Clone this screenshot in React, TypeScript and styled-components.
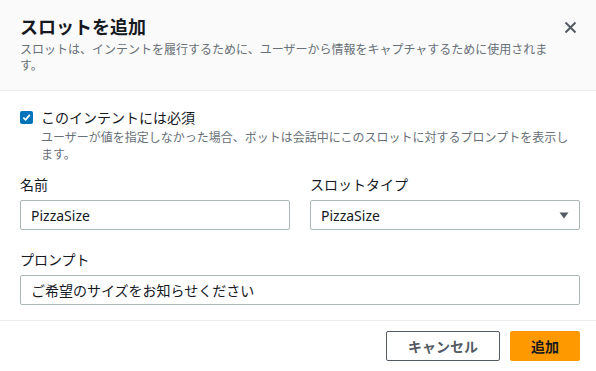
import React from "react";
import styled, { createGlobalStyle } from "styled-components";

const Global = createGlobalStyle`
  html, body { margin: 0; padding: 0; background: #ffffff; }
  body { font-family: "Noto Sans", "Noto Sans CJK JP", sans-serif; color: #16191f; }
  * { box-sizing: border-box; }
`;

const Modal = styled.div`
  width: 596px;
  height: 371px;
  display: flex;
  flex-direction: column;
  background: #fff;
`;

const Header = styled.div`
  background: #fafafa;
  border-bottom: 1px solid #eaeded;
  padding: 15px 19px 16px 20px;
  display: flex;
  align-items: flex-start;
  gap: 12px;
  height: 91px;
`;

const HeaderText = styled.div`
  flex: 1;
`;

const Title = styled.h2`
  margin: 0;
  font-size: 18px;
  line-height: 24px;
  font-weight: 700;
  color: #16191f;
`;

const Subtitle = styled.p`
  margin: 3px 0 0 0;
  font-size: 12px;
  line-height: 16px;
  color: #687078;
`;

const CloseButton = styled.button`
  border: none;
  background: transparent;
  padding: 0;
  margin: 5px 0 0 0;
  width: 14px;
  height: 14px;
  display: flex;
  align-items: center;
  justify-content: center;
  cursor: pointer;
`;

const Body = styled.div`
  flex: 1;
  padding: 17px 16px 0 20px;
  display: flex;
  flex-direction: column;
`;

const CheckRow = styled.label`
  display: flex;
  align-items: flex-start;
  gap: 8px;
`;

const Box = styled.span`
  width: 13px;
  height: 13px;
  margin-top: 3px;
  border-radius: 2px;
  background: #0073bb;
  display: flex;
  align-items: center;
  justify-content: center;
  flex-shrink: 0;
`;

const CheckText = styled.div`
  flex: 1;
`;

const CheckLabel = styled.div`
  font-size: 14px;
  line-height: 20px;
  color: #16191f;
`;

const Hint = styled.div`
  font-size: 12px;
  line-height: 17px;
  color: #687078;
  margin-top: 1px;
`;

const Grid = styled.div`
  display: grid;
  grid-template-columns: 1fr 1fr;
  column-gap: 20px;
  margin-top: 12px;
`;

const Field = styled.div<{ $top?: number }>`
  display: flex;
  flex-direction: column;
  margin-top: ${(p) => p.$top ?? 0}px;
`;

const Label = styled.div`
  font-size: 14px;
  line-height: 20px;
  color: #16191f;
  margin-bottom: 5px;
`;

const Input = styled.div`
  height: 30px;
  border: 1px solid #aab7b8;
  border-radius: 2px;
  background: #fff;
  padding: 0 10px;
  display: flex;
  align-items: center;
  justify-content: space-between;
  font-size: 14px;
  color: #16191f;
`;

const PromptText = styled.span`
  color: #16191f;
`;

const Footer = styled.div`
  border-top: 1px solid #eaeded;
  height: 51px;
  padding: 10px 16px 0 20px;
  display: flex;
  justify-content: flex-end;
  gap: 10px;
`;

const Button = styled.button<{ $primary?: boolean }>`
  height: 30px;
  padding: 0;
  border-radius: 2px;
  font-family: "Noto Sans", "Noto Sans CJK JP", sans-serif;
  font-size: 14px;
  font-weight: 700;
  cursor: pointer;
  border: 1px solid ${(p) => (p.$primary ? "#ff9900" : "#545b64")};
  background: ${(p) => (p.$primary ? "#ff9900" : "#ffffff")};
  color: ${(p) => (p.$primary ? "#16191f" : "#545b64")};
  width: ${(p) => (p.$primary ? 70 : 114)}px;
`;

export default function App() {
  return (
    <>
      <Global />
      <Modal>
        <Header>
          <HeaderText>
            <Title>スロットを追加</Title>
            <Subtitle>
              スロットは、インテントを履行するために、ユーザーから情報をキャプチャするために使用されます。
            </Subtitle>
          </HeaderText>
          <CloseButton aria-label="閉じる">
            <svg width="13" height="13" viewBox="0 0 13 13">
              <path d="M1.5 1.5 L11.5 11.5 M11.5 1.5 L1.5 11.5" stroke="#545b64" strokeWidth="2" fill="none" />
            </svg>
          </CloseButton>
        </Header>
        <Body>
          <CheckRow>
            <Box>
              <svg width="9" height="9" viewBox="0 0 9 9">
                <path d="M1.3 4.6 L3.6 6.8 L7.8 1.8" stroke="#fff" strokeWidth="1.8" fill="none" />
              </svg>
            </Box>
            <CheckText>
              <CheckLabel>このインテントには必須</CheckLabel>
              <Hint>
                ユーザーが値を指定しなかった場合、ボットは会話中にこのスロットに対するプロンプトを表示します。
              </Hint>
            </CheckText>
          </CheckRow>
          <Grid>
            <Field>
              <Label>名前</Label>
              <Input>PizzaSize</Input>
            </Field>
            <Field>
              <Label>スロットタイプ</Label>
              <Input>
                <span>PizzaSize</span>
                <svg width="10" height="7" viewBox="0 0 10 7">
                  <path d="M0.5 0.5 L9.5 0.5 L5 6.5 Z" fill="#545b64" />
                </svg>
              </Input>
            </Field>
          </Grid>
          <Field $top={20}>
            <Label>プロンプト</Label>
            <Input>
              <PromptText>ご希望のサイズをお知らせください</PromptText>
            </Input>
          </Field>
        </Body>
        <Footer>
          <Button>キャンセル</Button>
          <Button $primary>追加</Button>
        </Footer>
      </Modal>
    </>
  );
}
